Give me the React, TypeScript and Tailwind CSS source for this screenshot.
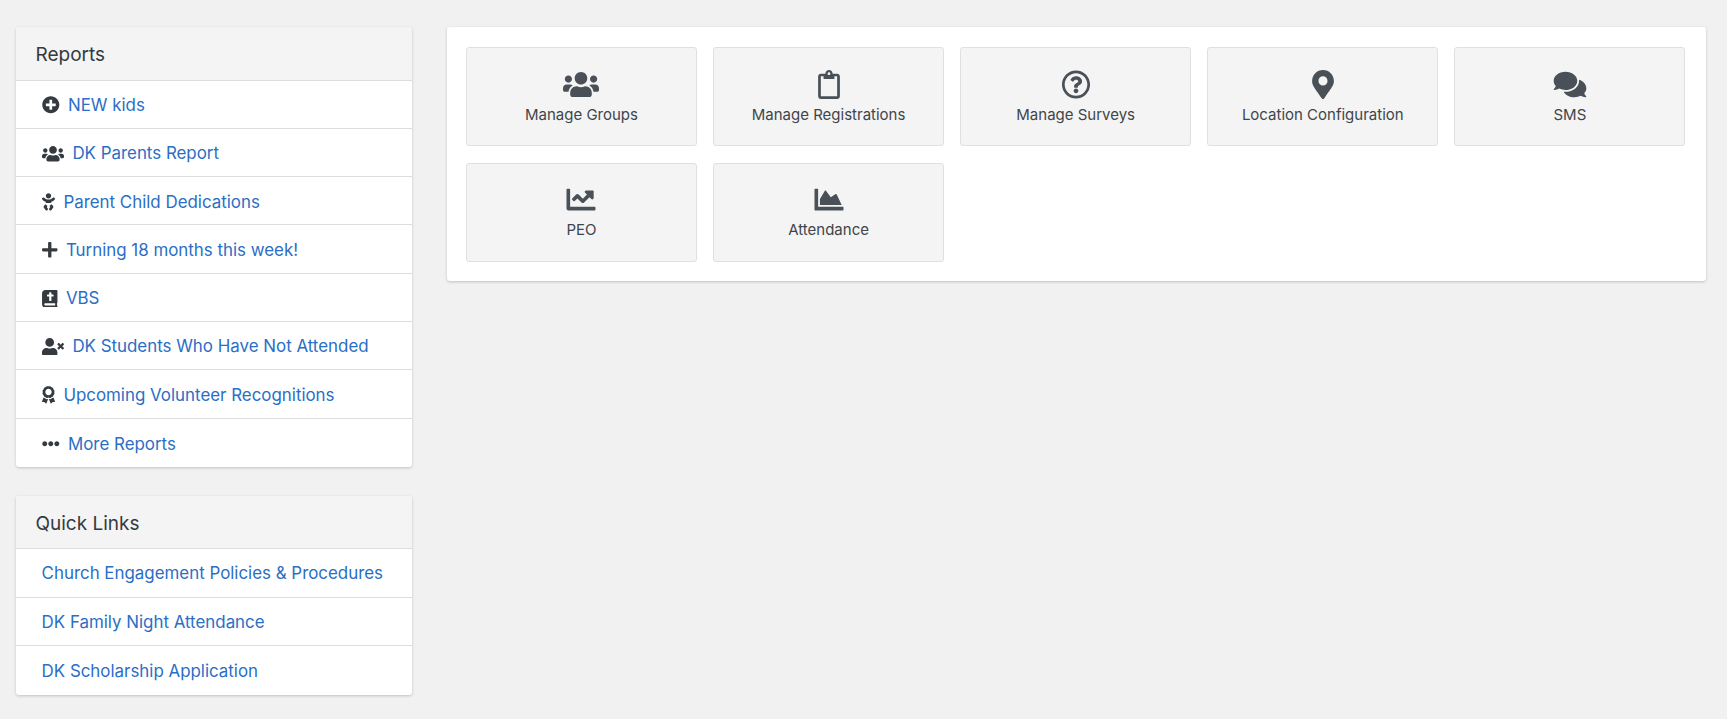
import type { ReactNode } from 'react';
import { FaPlusCircle, FaUsers, FaBaby, FaPlus, FaBible, FaUserTimes, FaAward, FaEllipsisH, FaRegClipboard, FaRegQuestionCircle, FaMapMarkerAlt, FaComments, FaChartLine, FaChartArea } from 'react-icons/fa';

const reports = [
    { name: 'NEW kids', icon: FaPlusCircle, width: 'w-[17.6px]' },
    { name: 'DK Parents Report', icon: FaUsers, width: 'w-[22px]' },
    { name: 'Parent Child Dedications', icon: FaBaby, width: 'w-[13px]' },
    { name: 'Turning 18 months this week!', icon: FaPlus, width: 'w-[15.5px]' },
    { name: 'VBS', icon: FaBible, width: 'w-[15.5px]' },
    { name: 'DK Students Who Have Not Attended', icon: FaUserTimes, width: 'w-[22px]' },
    { name: 'Upcoming Volunteer Recognitions', icon: FaAward, width: 'w-[13px]' },
    { name: 'More Reports', icon: FaEllipsisH, width: 'w-[17.6px]' },
];

const quickLinks = ['Church Engagement Policies & Procedures', 'DK Family Night Attendance', 'DK Scholarship Application'];

const tiles = [
    { name: 'Manage Groups', icon: FaUsers },
    { name: 'Manage Registrations', icon: FaRegClipboard },
    { name: 'Manage Surveys', icon: FaRegQuestionCircle },
    { name: 'Location Configuration', icon: FaMapMarkerAlt },
    { name: 'SMS', icon: FaComments },
    { name: 'PEO', icon: FaChartLine },
    { name: 'Attendance', icon: FaChartArea },
];

function Panel({ title, children }: { title: string; children: ReactNode }) {
    return (
        <div className="rounded-[3px] bg-white shadow-[0_1px_3px_rgba(0,0,0,0.2)]">
            <div className="flex h-[53.5px] items-center rounded-t-[3px] border-b border-[#ddd] bg-[#f4f4f4] px-[19.5px] pt-[4px] text-[19px] text-[#343a40]">
                {title}
            </div>
            {children}
        </div>
    );
}

export default function App() {
    return (
        <div className="flex h-[719px] gap-[34.6px] bg-[#f1f1f1] pt-[27px] pr-[21px] pl-4 font-['Inter',sans-serif]">
            {/* Sidebar */}
            <div className="flex w-[396px] flex-none flex-col gap-[29px]">
                <Panel title="Reports">
                    {reports.map((item) => {
                        const Icon = item.icon;
                        return (
                            <div key={item.name} className="flex h-[48.3px] items-center border-b border-[#ddd] px-[26.4px] pt-[2px] text-[16.9px] text-[#2a6ec6] last:border-b-0">
                                <Icon className={`mr-[8px] h-[17.6px] flex-none text-[#343a40] ${item.width}`} />
                                <a href="#" className="pt-[1px]">{item.name}</a>
                            </div>
                        );
                    })}
                </Panel>
                <Panel title="Quick Links">
                    {quickLinks.map((name) => (
                        <div key={name} className="flex h-[48.4px] items-center border-b border-[#ddd] px-[25.6px] pt-[2px] text-[16.9px] text-[#2a6ec6] last:border-b-0">
                            <a href="#">{name}</a>
                        </div>
                    ))}
                </Panel>
            </div>

            {/* Tiles */}
            <div className="h-[254px] min-w-0 flex-1 rounded-[3px] bg-white py-5 pr-5 pl-[19.4px] shadow-[0_1px_3px_rgba(0,0,0,0.2)]">
                <div className="grid grid-cols-[repeat(5,231px)] gap-x-[16.1px] gap-y-[16.6px]">
                    {tiles.map((tile) => {
                        const Icon = tile.icon;
                        return (
                            <a key={tile.name} href="#" className="flex h-[99px] flex-col items-center rounded-[3px] border border-[#e0e0e0] bg-[#f4f4f4] pt-[21.5px] text-[15px] text-[#3f454b]">
                                <Icon className="h-[29px] w-[36px] text-[#495057]" />
                                <span className="mt-[5px]">{tile.name}</span>
                            </a>
                        );
                    })}
                </div>
            </div>
        </div>
    );
}
